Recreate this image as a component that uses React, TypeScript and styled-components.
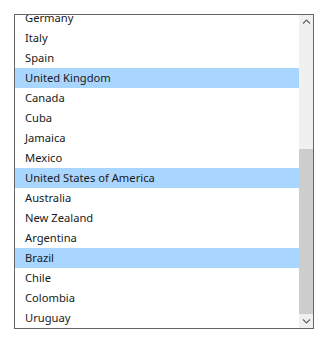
import styled, { createGlobalStyle } from 'styled-components';

const GlobalStyle = createGlobalStyle`
  html, body {
    margin: 0;
    padding: 0;
    background: #ffffff;
  }
`;

const countries = [
  'France',
  'Germany',
  'Italy',
  'Spain',
  'United Kingdom',
  'Canada',
  'Cuba',
  'Jamaica',
  'Mexico',
  'United States of America',
  'Australia',
  'New Zealand',
  'Argentina',
  'Brazil',
  'Chile',
  'Colombia',
  'Uruguay',
];

const selected = ['United Kingdom', 'United States of America', 'Brazil'];

const Chevron = ({ down }: { down?: boolean }) => (
  <svg width="9" height="6" viewBox="0 0 9 6">
    <path
      d={down ? 'M1 1.5 L4.5 5 L8 1.5' : 'M1 4.5 L4.5 1 L8 4.5'}
      fill="none"
      stroke="#606060"
      strokeWidth="1.1"
    />
  </svg>
);

const App = () => {
  return (
    <Page>
      <GlobalStyle />
      <ListBox>
        <Viewport>
          {countries.map((c) => (
            <Option key={c} $selected={selected.includes(c)}>
              {c}
            </Option>
          ))}
        </Viewport>
        <ScrollBar>
          <ArrowButton>
            <Chevron />
          </ArrowButton>
          <Track>
            <Thumb />
          </Track>
          <ArrowButton>
            <Chevron down />
          </ArrowButton>
        </ScrollBar>
      </ListBox>
    </Page>
  );
};

const Page = styled.div`
  padding: 14px 0 0 14px;
`;

const ListBox = styled.div`
  display: flex;
  width: 300px;
  height: 315px;
  box-sizing: border-box;
  border: 1px solid #646464;
  background: #ffffff;
`;

const Viewport = styled.div`
  flex: 1;
  display: flex;
  flex-direction: column;
  justify-content: flex-end;
  overflow: hidden;
`;

const Option = styled.div<{ $selected?: boolean }>`
  flex-shrink: 0;
  height: 20px;
  line-height: 20px;
  padding-left: 10px;
  font-family: 'Noto Sans', sans-serif;
  font-size: 11.2px;
  color: #1a1a1a;
  white-space: nowrap;
  background: ${(p) => (p.$selected ? '#a8d6ff' : 'transparent')};
`;

const ScrollBar = styled.div`
  width: 14px;
  display: flex;
  flex-direction: column;
  background: #f0f0f0;
`;

const ArrowButton = styled.div`
  height: 14px;
  display: flex;
  align-items: center;
  justify-content: center;
`;

const Track = styled.div`
  flex: 1;
  display: flex;
  flex-direction: column;
  justify-content: flex-end;
`;

const Thumb = styled.div`
  height: 165px;
  background: #cdcdcd;
`;

export default App;
